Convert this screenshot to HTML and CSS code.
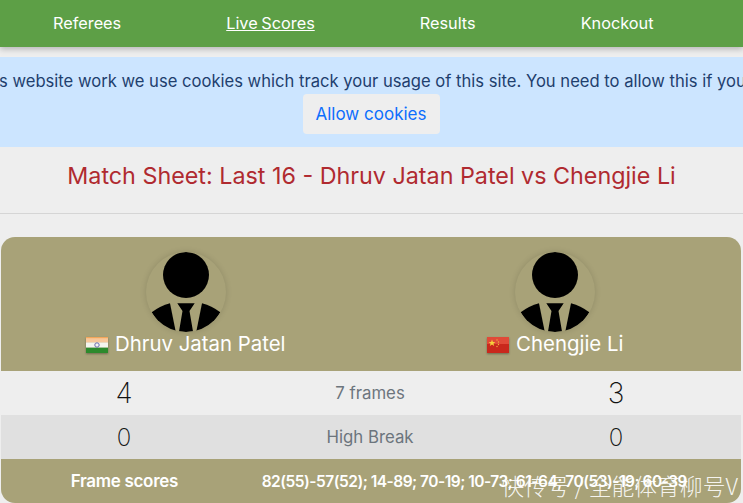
FILE: index.html
```html
<!DOCTYPE html>
<html lang="en">
<head>
    <meta charset="UTF-8">
    <meta name="viewport" content="width=device-width, initial-scale=1.0">
    <title>Match Sheet</title>
    <link rel="stylesheet" href="styles.css">
</head>
<body>
    <nav class="topnav">
        <a href="#">Referees</a>
        <a href="#" class="active">Live Scores</a>
        <a href="#">Results</a>
        <a href="#">Knockout</a>
    </nav>

    <div class="cookieBox">
        <p>To make this website work we use cookies which track your usage of this site. You need to allow this if you want to go</p>
        <button class="cookieBtn">Allow cookies</button>
    </div>

    <h1 class="matchTitle">Match Sheet: Last 16 - Dhruv Jatan Patel vs Chengjie Li</h1>
    <hr class="divider">

    <div class="matchCard">
        <div class="players">
            <div class="player">
                <svg class="avatar" viewBox="0 0 80 80">
                    <circle cx="40" cy="23" r="23"/>
                    <path d="M5.7 60.3 Q14 54 24 51.3 L29.7 79.4 Q13 75 5.7 60.3Z"/>
                    <path d="M74.3 60.3 Q66 54 56 51.3 L50.3 79.4 Q67 75 74.3 60.3Z"/>
                    <path d="M31.3 51.3 H48.7 L43.5 59 L47 79.6 Q40 80.4 33 79.6 L36.5 59Z"/>
                </svg>
                <div class="playerName">
                    <svg class="flag" viewBox="0 0 22 16">
                        <rect width="22" height="5.4" fill="#f2a65a"/>
                        <rect y="1.2" width="22" height="4.2" fill="#f8c79a"/>
                        <rect y="5.4" width="22" height="5.3" fill="#f4f4ee"/>
                        <rect y="10.7" width="22" height="5.3" fill="#2c8a2c"/>
                        <circle cx="11" cy="8" r="2.2" fill="none" stroke="#6a6ab0" stroke-width="1"/>
                    </svg>
                    Dhruv Jatan Patel
                </div>
            </div>
            <div class="player">
                <svg class="avatar" viewBox="0 0 80 80">
                    <circle cx="40" cy="23" r="23"/>
                    <path d="M5.7 60.3 Q14 54 24 51.3 L29.7 79.4 Q13 75 5.7 60.3Z"/>
                    <path d="M74.3 60.3 Q66 54 56 51.3 L50.3 79.4 Q67 75 74.3 60.3Z"/>
                    <path d="M31.3 51.3 H48.7 L43.5 59 L47 79.6 Q40 80.4 33 79.6 L36.5 59Z"/>
                </svg>
                <div class="playerName">
                    <svg class="flag" viewBox="0 0 22 16">
                        <rect width="22" height="16" fill="#c9281c"/>
                        <rect width="22" height="7" fill="#e04a38"/>
                        <polygon points="5,2.5 5.9,5 8.4,5 6.4,6.5 7.2,9 5,7.5 2.8,9 3.6,6.5 1.6,5 4.1,5" fill="#f6d13c"/>
                        <circle cx="10" cy="3" r=".7" fill="#f0b040"/>
                        <circle cx="11.5" cy="5" r=".7" fill="#f0b040"/>
                        <circle cx="11.5" cy="7.5" r=".7" fill="#f0b040"/>
                        <circle cx="10" cy="9.5" r=".7" fill="#f0b040"/>
                    </svg>
                    Chengjie Li
                </div>
            </div>
        </div>

        <div class="statRow">
            <div class="big">4</div>
            <div class="statLabel">7 frames</div>
            <div class="big">3</div>
        </div>
        <div class="statRow alt">
            <div class="mid">0</div>
            <div class="statLabel">High Break</div>
            <div class="mid">0</div>
        </div>
        <div class="frameRow">
            <div class="frameLabel">Frame scores</div>
            <div class="frameScores">82(55)-57(52); 14-89; 70-19; 10-73; 61-64; 70(53)-19; 60-39</div>
        </div>
    </div>

    <div class="watermark">快传号 / 全能体育柳号V</div>
</body>
</html>
```

FILE: styles.css
```css
html, body {
    height: 503px;
    overflow: hidden;
}

body {
    margin: 0;
    position: relative;
    background: #eeeeee;
    font-family: "Inter", "Noto Sans", sans-serif;
    color: #212529;
}

/* Barra de cima */
.topnav {
    display: flex;
    gap: 105px;
    height: 45px;
    padding: 0 0 2px 53px;
    align-items: center;
    background: #5d9f46;
    box-shadow: 0 2px 6px rgba(0, 0, 0, 0.25);
}

.topnav a {
    color: #fff;
    font-size: 16.3px;
    word-spacing: -1px;
    text-decoration: none;
    white-space: nowrap;
}

.topnav a.active {
    text-decoration: underline;
}

/* Aviso de cookies */
.cookieBox {
    height: 90px;
    margin-top: 10px;
    padding: 14px 1px 0 0;
    box-sizing: border-box;
    background: #cce5ff;
    display: flex;
    flex-direction: column;
    align-items: center;
    overflow: hidden;
}

.cookieBox p {
    margin: 0;
    font-size: 16.6px;
    line-height: 20px;
    color: #1f3f6e;
    white-space: nowrap;
}

.cookieBtn {
    flex: none;
    width: 137px;
    height: 40px;
    margin-top: 3px;
    border: none;
    border-radius: 4px;
    background: #eeeeee;
    color: #0d6efd;
    font-family: inherit;
    font-size: 17px;
}

.matchTitle {
    margin: 0;
    padding-top: 14px;
    text-align: center;
    font-size: 23.3px;
    line-height: 30px;
    font-weight: 400;
    color: #b02a30;
}

.divider {
    margin: 22px 0 0;
    border: none;
    border-top: 1px solid #d5d5d5;
}

/* Cartão da partida */
.matchCard {
    margin: 23px 2px 0 1px;
    height: 266px;
    border-radius: 14px;
    overflow: hidden;
    background: #a8a278;
}

.players {
    display: grid;
    grid-template-columns: 1fr 1fr;
    height: 134px;
    padding-right: 1px;
}

.player {
    display: flex;
    flex-direction: column;
    align-items: center;
    padding-top: 15px;
}

.avatar {
    width: 80px;
    height: 80px;
    border-radius: 50%;
    box-shadow: 0 0 6px rgba(0, 0, 0, 0.14);
}

.playerName {
    display: flex;
    align-items: center;
    gap: 7px;
    height: 22px;
    color: #fff;
    font-size: 20.4px;
    white-space: nowrap;
}

.flag {
    width: 22px;
    height: 16px;
    margin-top: 4px;
    box-shadow: 0 1px 2px rgba(0, 0, 0, 0.35);
}

.statRow {
    display: grid;
    grid-template-columns: repeat(3, 1fr);
    align-items: center;
    height: 44px;
    padding-right: 2px;
    background: #eeeeee;
    text-align: center;
}

.statRow.alt {
    background: #e0e0e0;
}

.big {
    font-size: 28px;
    font-weight: 200;
    color: #111;
}

.mid {
    font-size: 24px;
    font-weight: 200;
    color: #111;
}

.statLabel {
    font-size: 16.8px;
    color: #6c757d;
}

.frameRow {
    display: grid;
    grid-template-columns: 1fr 2fr;
    align-items: center;
    height: 44px;
    color: #fff;
    font-size: 15.5px;
    font-weight: 600;
}

.frameLabel {
    text-align: center;
    font-size: 17px;
    letter-spacing: -0.3px;
}

.frameScores {
    padding-left: 14px;
    letter-spacing: -0.5px;
    white-space: nowrap;
}

/* Marca de agua sobre o cartão */
.watermark {
    position: absolute;
    right: 5px;
    bottom: 1px;
    color: rgba(255, 255, 255, 0.9);
    font-family: "Noto Sans CJK SC", sans-serif;
    font-size: 22.8px;
    font-weight: 300;
    white-space: nowrap;
}
```
